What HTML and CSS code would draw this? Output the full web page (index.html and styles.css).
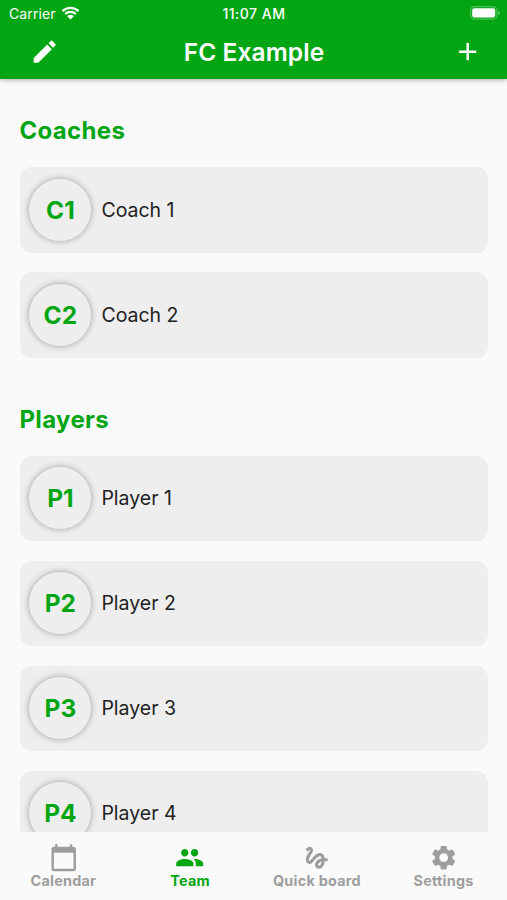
FILE: index.html
```html
<!DOCTYPE html>
<html lang="en">
<head>
<meta charset="utf-8">
<title>FC Example</title>
<link rel="stylesheet" href="styles.css">
</head>
<body>
<div class="app">
  <header class="header">
    <div class="status">
      <div class="carrier"><span class="carrier-name">Carrier</span>
        <svg class="wifi" viewBox="0 0 18 14"><path d="M1 5.2a11.5 11.5 0 0 1 16 0M3.7 8a7.6 7.6 0 0 1 10.6 0" fill="none" stroke="#fff" stroke-width="2.3"/><path d="M5.7 10.2a4.7 4.7 0 0 1 6.6 0L9 13.6z" fill="#fff"/></svg>
      </div>
      <div class="clock">11:07 AM</div>
      <svg class="battery" viewBox="0 0 30 14"><rect x=".6" y=".6" width="26.3" height="12.6" rx="3.8" fill="none" stroke="#fff" stroke-opacity=".3" stroke-width="1.2"/><rect x="2.2" y="2.2" width="23" height="9.4" rx="2" fill="#fff"/><path d="M28.2 4.8q1.6.7 1.6 2.1t-1.6 2.1z" fill="#fff" fill-opacity=".45"/></svg>
    </div>
    <div class="toolbar">
      <svg class="icon" viewBox="0 0 24 24"><path d="M3 17.25V21h3.75L17.81 9.94l-3.75-3.75L3 17.25zM20.71 7.04a1 1 0 0 0 0-1.41l-2.34-2.34a1 1 0 0 0-1.41 0l-1.83 1.83 3.75 3.75 1.83-1.83z"/></svg>
      <h1 class="title">FC Example</h1>
      <svg class="icon add" viewBox="0 0 24 24"><path d="M19 13h-6v6h-2v-6H5v-2h6V5h2v6h6z"/></svg>
    </div>
  </header>
  <main class="content">
    <h2 class="heading">Coaches</h2>
    <ul class="list">
      <li class="card"><span class="avatar">C1</span><span class="name">Coach 1</span></li>
      <li class="card"><span class="avatar">C2</span><span class="name">Coach 2</span></li>
    </ul>
    <h2 class="heading">Players</h2>
    <ul class="list">
      <li class="card"><span class="avatar">P1</span><span class="name">Player 1</span></li>
      <li class="card"><span class="avatar">P2</span><span class="name">Player 2</span></li>
      <li class="card"><span class="avatar">P3</span><span class="name">Player 3</span></li>
      <li class="card"><span class="avatar">P4</span><span class="name">Player 4</span></li>
    </ul>
  </main>
  <nav class="tabs">
    <a class="tab"><svg class="icon" viewBox="0 0 24 24"><path d="M20 3h-1V1h-2v2H7V1H5v2H4c-1.1 0-2 .9-2 2v16c0 1.1.9 2 2 2h16c1.1 0 2-.9 2-2V5c0-1.1-.9-2-2-2zm0 18H4V8h16v13z"/></svg><span class="label">Calendar</span></a>
    <a class="tab active"><svg class="icon" viewBox="0 0 24 24"><path d="M16 11c1.66 0 2.99-1.34 2.99-3S17.66 5 16 5s-3 1.34-3 3 1.34 3 3 3zm-8 0c1.66 0 2.99-1.34 2.99-3S9.66 5 8 5 5 6.34 5 8s1.34 3 3 3zm0 2c-2.33 0-7 1.17-7 3.5V19h14v-2.5c0-2.33-4.67-3.5-7-3.5zm8 0c-.29 0-.62.02-.97.05 1.16.84 1.97 1.97 1.97 3.45V19h6v-2.5c0-2.33-4.67-3.5-7-3.5z"/></svg><span class="label">Team</span></a>
    <a class="tab"><svg class="icon" viewBox="0 0 24 24"><path d="M4.59 6.89c.7-.71 1.4-1.35 1.71-1.22.5.2 0 1.03-.3 1.52-.25.42-2.86 3.89-2.86 6.31 0 1.28.48 2.34 1.34 2.98.75.56 1.74.73 2.64.46 1.07-.31 1.95-1.4 3.06-2.77 1.21-1.49 2.83-3.44 4.08-3.44 1.63 0 1.65 1.01 1.76 1.79-3.78.64-5.38 3.67-5.38 5.37 0 1.7 1.44 3.09 3.21 3.09 1.63 0 4.29-1.33 4.69-6.1H21v-2.5h-2.47c-.15-1.65-1.09-4.2-4.03-4.2-2.25 0-4.18 1.91-4.94 2.84-.58.73-2.06 2.48-2.29 2.72-.25.3-.68.84-1.11.84-.45 0-.72-.83-.36-1.92.35-1.09 1.4-2.86 1.85-3.52.78-1.14 1.3-1.92 1.3-3.28C8.95 3.69 7.31 3 6.44 3 5.12 3 3.97 4 3.72 4.25c-.36.36-.66.66-.88.93l1.75 1.71zm9.29 11.66c-.31 0-.74-.26-.74-.72 0-.6.73-2.2 2.87-2.76-.3 2.69-1.43 3.48-2.13 3.48z"/></svg><span class="label">Quick board</span></a>
    <a class="tab"><svg class="icon" viewBox="0 0 24 24"><path d="M19.14 12.94c.04-.3.06-.61.06-.94 0-.32-.02-.64-.07-.94l2.03-1.58a.49.49 0 0 0 .12-.61l-1.92-3.32a.488.488 0 0 0-.59-.22l-2.39.96c-.5-.38-1.03-.7-1.62-.94l-.36-2.54a.484.484 0 0 0-.48-.41h-3.84c-.24 0-.43.17-.47.41l-.36 2.54c-.59.24-1.13.57-1.62.94l-2.39-.96c-.22-.08-.47 0-.59.22L2.74 8.87c-.12.21-.08.47.12.61l2.03 1.58c-.05.3-.09.63-.09.94s.02.64.07.94l-2.03 1.58a.49.49 0 0 0-.12.61l1.92 3.32c.12.22.37.29.59.22l2.39-.96c.5.38 1.03.7 1.62.94l.36 2.54c.05.24.24.41.48.41h3.84c.24 0 .44-.17.47-.41l.36-2.54c.59-.24 1.13-.56 1.62-.94l2.39.96c.22.08.47 0 .59-.22l1.92-3.32c.12-.22.07-.47-.12-.61l-2.01-1.58zM12 15.6A3.61 3.61 0 0 1 8.4 12c0-1.98 1.62-3.6 3.6-3.6s3.6 1.62 3.6 3.6-1.62 3.6-3.6 3.6z"/></svg><span class="label">Settings</span></a>
  </nav>
</div>
</body>
</html>
```

FILE: styles.css
```css
* { box-sizing: border-box; }
body { margin: 0; font-family: Inter, "Liberation Sans", sans-serif; background: #fafafa; }
.app { height: 900px; display: flex; flex-direction: column; overflow: hidden; }
.header { height: 79px; flex: none; background: #02a613; color: #fff; box-shadow: 0 1px 5px rgba(0,0,0,.3); z-index: 1; }
.status { height: 26px; display: grid; grid-template-columns: 1fr auto 1fr; align-items: center; padding: 1px 7px 0 9px; }
.carrier { display: flex; align-items: center; gap: 5.5px; font-size: 14px; letter-spacing: .1px; }
.wifi { width: 19px; height: 14px; margin-top: -1px; }
.clock { font-size: 14px; font-weight: 500; letter-spacing: .5px; margin-left: -1px; }
.battery { width: 30px; height: 14px; justify-self: end; margin-top: -1px; }
.toolbar { height: 53px; display: flex; align-items: center; justify-content: space-between; padding: 0 24.5px 1px 29.5px; }
.icon { width: 29.4px; height: 29.4px; fill: currentColor; display: block; flex: none; }
.title { margin: 0 4px 0 0; font-size: 24.5px; font-weight: 600; letter-spacing: .1px; }
.content { flex: 1; min-height: 0; overflow: hidden; padding: 37px 19.5px 0 20.4px; }
.heading { margin: 0 0 0 -1px; font-size: 24px; line-height: 30px; font-weight: 700; letter-spacing: .35px; color: #02a613; }
.list { list-style: none; margin: 21px 0 46.5px; padding: 0; display: flex; flex-direction: column; gap: 19.5px; }
.list:first-of-type { margin-bottom: 47px; }
.card { height: 85.5px; flex: none; border-radius: 12px; background: #eee; display: flex; align-items: center; gap: 10px; padding-left: 9px; }
.avatar { width: 62px; height: 62px; border-radius: 50%; background: #eee; box-shadow: 0 0 6px rgba(0,0,0,.35); display: flex; align-items: center; justify-content: center; color: #02a613; font-size: 24.5px; font-weight: 700; }
.name { font-size: 19.5px; color: #212121; }
.tabs { height: 68px; flex: none; display: grid; grid-template-columns: repeat(4, 1fr); background: #fafafa; }
.tab { display: flex; flex-direction: column; align-items: center; padding-top: 10.5px; color: #9e9e9e; }
.label { font-size: 14.4px; line-height: 17px; font-weight: 700; letter-spacing: .25px; white-space: nowrap; }
.active { color: #02a613; }
```
